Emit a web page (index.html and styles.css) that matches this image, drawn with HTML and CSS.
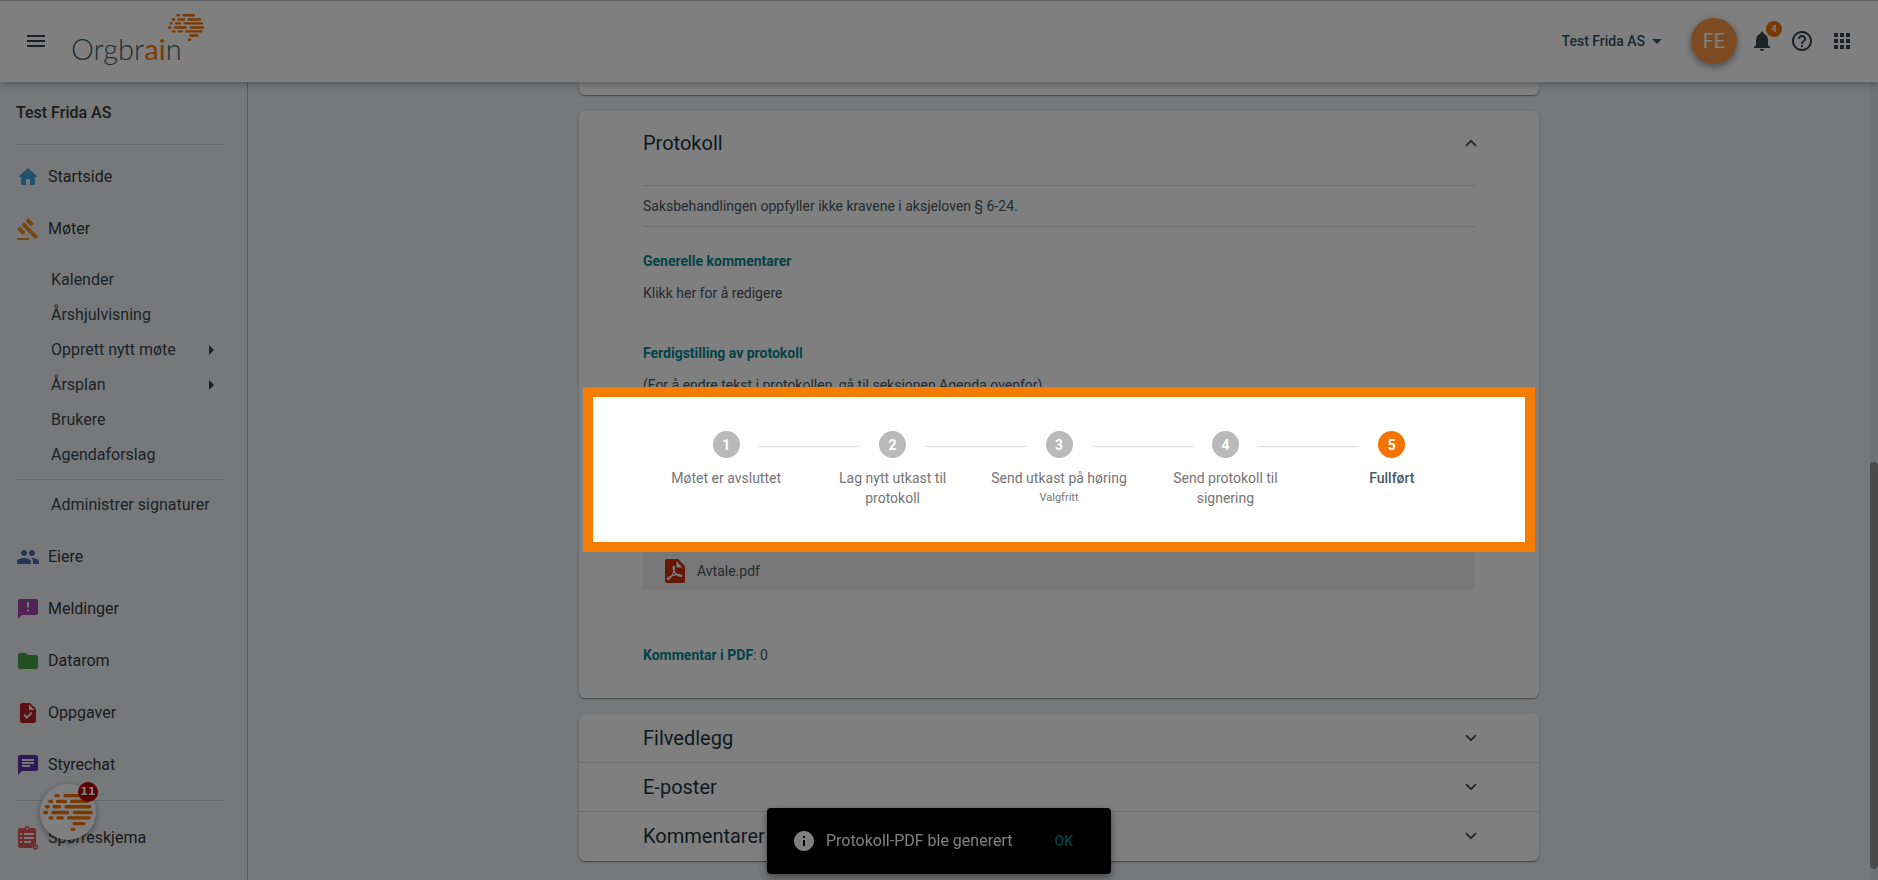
FILE: index.html
```html
<!DOCTYPE html>
<html lang="nb">
<head>
<meta charset="utf-8">
<title>Orgbrain</title>
<link rel="stylesheet" href="styles.css">
</head>
<body>
<svg class="defs" aria-hidden="true">
  <symbol id="brain" viewBox="130 821 148 110">
    <path fill="none" stroke="#f37200" stroke-width="10" stroke-linecap="round" d="M169 826h6M195 826h41M150 843h5M173 843h23M215 843h46M140 859h5M163 859h16M198 859h71M135 876h5M159 876h44M223 876h50M151 892h5M174 892h13M206 892h61M222 909h29M216 926h5"/>
  </symbol>
  <symbol id="chevron" viewBox="0 0 12 8"><path fill="none" stroke="currentColor" stroke-width="1.7" d="M1 1.2l5 5 5-5"/></symbol>
</svg>

<header class="topbar">
  <button class="icon-btn" aria-label="Meny"><svg class="icon" viewBox="0 0 24 24"><path d="M3 18h18v-2H3v2zm0-5h18v-2H3v2zm0-7v2h18V6H3z"/></svg></button>
  <a class="logo" href="#" aria-label="Orgbrain"><span class="logo-text">Orgbr<b class="logo-accent">ai</b>n</span><svg class="logo-brain"><use href="#brain"/></svg></a>
  <div class="tools">
    <button class="company">Test Frida AS<svg class="icon" viewBox="0 0 24 24"><path d="M7 10l5 5 5-5z"/></svg></button>
    <button class="avatar">FE</button>
    <div class="tool-icons">
      <button class="icon-btn" aria-label="Varsler"><svg class="icon" viewBox="0 0 24 24"><path d="M12 22c1.1 0 2-.9 2-2h-4c0 1.1.89 2 2 2zm6-6v-5c0-3.07-1.64-5.64-4.5-6.32V4c0-.83-.67-1.5-1.5-1.5s-1.5.67-1.5 1.5v.68C7.63 5.36 6 7.92 6 11v5l-2 2v1h16v-1l-2-2z"/></svg><span class="badge">4</span></button>
      <button class="icon-btn" aria-label="Hjelp"><svg class="icon" viewBox="0 0 24 24"><path d="M11 18h2v-2h-2v2zm1-16C6.48 2 2 6.48 2 12s4.48 10 10 10 10-4.48 10-10S17.52 2 12 2zm0 18c-4.41 0-8-3.59-8-8s3.59-8 8-8 8 3.59 8 8-3.59 8-8 8zm0-14c-2.21 0-4 1.79-4 4h2c0-1.1.9-2 2-2s2 .9 2 2c0 2-3 1.75-3 5h2c0-2.25 3-2.5 3-5 0-2.21-1.79-4-4-4z"/></svg></button>
      <button class="icon-btn" aria-label="Apper"><svg class="icon" viewBox="0 0 24 24"><path d="M4 8h4V4H4v4zm6 12h4v-4h-4v4zm-6 0h4v-4H4v4zm0-6h4v-4H4v4zm6 0h4v-4h-4v4zm6-10v4h4V4h-4zm-6 4h4V4h-4v4zm6 6h4v-4h-4v4zm0 6h4v-4h-4v4z"/></svg></button>
    </div>
  </div>
</header>

<div class="shell">
  <nav class="sidebar">
    <h2 class="org">Test Frida AS</h2>
    <div class="group">
      <a class="item" href="#"><svg class="icon blue" viewBox="0 0 24 24"><path d="M10 20v-6h4v6h5v-8h3L12 3 2 12h3v8z"/></svg>Startside</a>
      <a class="item" href="#"><svg class="icon amber" viewBox="0 0 24 24"><path d="M1 21h12v2H1zM5.245 8.07l2.83-2.827 14.14 14.142-2.828 2.828zM12.317 1l5.657 5.656-2.83 2.83-5.654-5.66zM3.825 9.485l5.657 5.657-2.828 2.828-5.657-5.657z"/></svg>Møter</a>
    </div>
    <div class="subgroup">
      <a class="sub" href="#">Kalender</a>
      <a class="sub" href="#">Årshjulvisning</a>
      <a class="sub more" href="#">Opprett nytt møte</a>
      <a class="sub more" href="#">Årsplan</a>
      <a class="sub" href="#">Brukere</a>
      <a class="sub" href="#">Agendaforslag</a>
    </div>
    <div class="subgroup ruled">
      <a class="sub" href="#">Administrer signaturer</a>
    </div>
    <div class="group">
      <a class="item" href="#"><svg class="icon indigo" viewBox="0 0 24 24"><path d="M16 11c1.66 0 2.99-1.34 2.99-3S17.66 5 16 5s-3 1.34-3 3 1.34 3 3 3zm-8 0c1.66 0 2.99-1.34 2.99-3S9.66 5 8 5 5 6.34 5 8s1.34 3 3 3zm0 2c-2.33 0-7 1.17-7 3.5V19h14v-2.5c0-2.33-4.67-3.5-7-3.5zm8 0c-.29 0-.62.02-.97.05 1.16.84 1.97 1.97 1.97 3.45V19h6v-2.5c0-2.33-4.67-3.5-7-3.5z"/></svg>Eiere</a>
      <a class="item" href="#"><svg class="icon purple" viewBox="0 0 24 24"><path d="M20 2H4c-1.1 0-1.99.9-1.99 2L2 22l4-4h14c1.1 0 2-.9 2-2V4c0-1.1-.9-2-2-2zm-7 12.5h-2v-2h2v2zm0-4h-2V5h2v5.5z"/></svg>Meldinger</a>
      <a class="item" href="#"><svg class="icon green" viewBox="0 0 24 24"><path d="M10 4H4c-1.1 0-1.99.9-1.99 2L2 18c0 1.1.9 2 2 2h16c1.1 0 2-.9 2-2V8c0-1.1-.9-2-2-2h-8l-2-2z"/></svg>Datarom</a>
      <a class="item" href="#"><svg class="icon red" viewBox="0 0 24 24"><path d="M14 2H6c-1.1 0-1.99.9-1.99 2L4 20c0 1.1.89 2 1.99 2H18c1.1 0 2-.9 2-2V8l-6-6zm-3.06 16L7.4 14.46l1.41-1.41 2.12 2.12 4.24-4.24 1.41 1.41L10.94 18zM13 9V3.5L18.5 9H13z"/></svg>Oppgaver</a>
      <a class="item" href="#"><svg class="icon violet" viewBox="0 0 24 24"><path d="M20 2H4c-1.1 0-1.99.9-1.99 2L2 22l4-4h14c1.1 0 2-.9 2-2V4c0-1.1-.9-2-2-2zM6 9h12v2H6V9zm8 5H6v-2h8v2zm4-6H6V6h12v2z"/></svg>Styrechat</a>
    </div>
    <div class="group last">
      <a class="item" href="#"><svg class="icon coral" viewBox="0 0 24 24"><path fill-rule="evenodd" d="M4 2h4.500a2.600 2.600 0 0 1 5 0H18q2 0 2 2v13.500a4.500 4.500 0 0 0-3.500 4.500H4q-2 0-2-2V4q0-2 2-2zM4 7v2h2V7zm4 0v2h10V7zm-4 4v2h2v-2zm4 0v2h10v-2zm-4 4v2h2v-2zm4 0v2h7v-2zM11 1.500a1 1 0 1 0 .1 0z"/><circle cx="19.500" cy="21" r="2.700"/><path d="M18.200 21l1 1 1.700-2" fill="none" stroke="#eef0f2" stroke-width=".9"/></svg>Spørreskjema</a>
    </div>
  </nav>

  <main class="content">
    <section class="card card-tail"></section>

    <section class="card">
      <button class="panel-head panel-open">Protokoll<svg class="chev up"><use href="#chevron"/></svg></button>
      <div class="panel-body">
        <p class="notice">Saksbehandlingen oppfyller ikke kravene i aksjeloven § 6-24.</p>
        <h3 class="subtitle first">Generelle kommentarer</h3>
        <p class="text">Klikk her for å redigere</p>
        <h3 class="subtitle">Ferdigstilling av protokoll</h3>
        <p class="text">(For å endre tekst i protokollen, gå til seksjonen Agenda ovenfor)</p>
        <ol class="stepper">
          <li class="step"><div class="step-head"><span class="dot">1</span></div><div class="label">Møtet er avsluttet</div></li>
          <li class="step"><div class="step-head"><span class="dot">2</span></div><div class="label">Lag nytt utkast til protokoll</div></li>
          <li class="step"><div class="step-head"><span class="dot">3</span></div><div class="label">Send utkast på høring<small class="optional">Valgfritt</small></div></li>
          <li class="step"><div class="step-head"><span class="dot">4</span></div><div class="label">Send protokoll til signering</div></li>
          <li class="step current"><div class="step-head"><span class="dot">5</span></div><div class="label">Fullført</div></li>
        </ol>
        <a class="file" href="#"><svg class="pdf" viewBox="0 0 20 24"><path fill="#c9310f" d="M2 0h11l7 7v15q0 2-2 2H2q-2 0-2-2V2Q0 0 2 0z"/><path fill="#fff" d="M11.500 2v6.500H17z"/><path fill="none" stroke="#fff" stroke-width="1.200" d="M2.500 20.500c-1-1 1.500-3 5-4 4-1.200 9-1.200 9.300.2.200 1.300-3 .7-5.500-1.700C8.800 12.700 7.500 9 8.300 7.500c.8-1 1.500.6.900 3.500-.6 3-4.500 10.500-6.700 9.500z"/></svg>Avtale.pdf</a>
        <p class="pdf-comments"><strong class="teal">Kommentar i PDF</strong>: 0</p>
      </div>
    </section>

    <section class="card card-list">
      <button class="panel-head">Filvedlegg<svg class="chev"><use href="#chevron"/></svg></button>
      <button class="panel-head">E-poster<svg class="chev"><use href="#chevron"/></svg></button>
      <button class="panel-head">Kommentarer<svg class="chev"><use href="#chevron"/></svg></button>
    </section>
  </main>
  <div class="scroll-track" aria-hidden="true"><div class="scroll-thumb"></div></div>
</div>

<button class="chat" aria-label="Chat"><svg class="chat-brain"><use href="#brain"/></svg><span class="chat-badge">11</span></button>

<div class="snackbar" role="status">
  <svg class="icon" viewBox="0 0 24 24"><path d="M12 2C6.48 2 2 6.48 2 12s4.48 10 10 10 10-4.48 10-10S17.52 2 12 2zm1 15h-2v-6h2v6zm0-8h-2V7h2v2z"/></svg>
  <span class="snack-text">Protokoll-PDF ble generert</span>
  <button class="snack-ok">OK</button>
</div>

<div class="dim"></div>
</body>
</html>
```

FILE: styles.css
```css
* { box-sizing: border-box; }

body {
  margin: 0;
  height: 100vh;
  display: flex;
  flex-direction: column;
  overflow: hidden;
  background: #eff1f4;
  color: #4a545c;
  font: 14px/20px Roboto, "Liberation Sans", sans-serif;
}

button {
  border: 0;
  padding: 0;
  background: none;
  color: inherit;
  font: inherit;
  cursor: pointer;
}

a { color: inherit; text-decoration: none; }
h2, h3, p, ol { margin: 0; padding: 0; }

.defs { display: none; }
.icon { width: 24px; height: 24px; flex: none; display: block; fill: currentColor; }

/* Top bar */
.topbar {
  flex: none;
  height: 82px;
  display: flex;
  align-items: center;
  padding: 0 24px 1px;
  background: #fff;
  border-top: 1px solid #b4b4b4;
  box-shadow: 0 2px 8px rgba(0, 0, 0, .3);
  position: relative;
  z-index: 1;
  color: #37444c;
}
.icon-btn { position: relative; }
.logo { display: flex; align-items: flex-start; margin-left: 23px; height: 54px; }
.logo-text {
  align-self: flex-end;
  font: 300 29px/38px Lato, sans-serif;
  color: #455a64;
}
.logo-accent { font-weight: 400; color: #f57c00; }
.logo-brain { width: 36px; height: 27px; margin-left: -14px; }
.tools { display: flex; align-items: center; margin-left: auto; }
.company { display: flex; align-items: center; font-weight: 500; color: #37505c; }
.avatar {
  width: 46px;
  height: 46px;
  margin: 0 13px 0 22px;
  border-radius: 50%;
  background: #f89746;
  color: #fff;
  font-size: 20px;
  box-shadow: 0 3px 6px rgba(0, 0, 0, .3), 0 2px 12px rgba(0, 0, 0, .15);
}
.tool-icons { display: flex; gap: 16px; }
.badge {
  position: absolute;
  top: -8px;
  right: -8px;
  width: 16px;
  height: 16px;
  border-radius: 50%;
  background: #f57200;
  color: #fff;
  font: 700 9px/16px Roboto, sans-serif;
  text-align: center;
}

/* Shell */
.shell { flex: 1; min-height: 0; display: flex; }

.sidebar {
  flex: none;
  width: 248px;
  border-right: 1px solid #b9bbbd;
  padding: 0 23px 0 16px;
  font-size: 16px;
  color: #35383a;
}
.org {
  font-size: 16px;
  font-weight: 500;
  line-height: 20px;
  padding: 21px 0;
  margin-bottom: 6px;
  border-bottom: 1px solid #cfd0d2;
}
.item { display: flex; align-items: center; gap: 8px; height: 52px; }
.subgroup { padding: 7px 0; color: #37474f; }
.ruled { border-top: 1px solid #cfd0d2; padding-bottom: 9px; }
.sub { display: flex; align-items: center; height: 35px; padding: 0 10px 0 35px; }
.more::after {
  content: "";
  margin-left: auto;
  border-left: 5px solid currentColor;
  border-top: 5px solid transparent;
  border-bottom: 5px solid transparent;
}
.last { margin-top: 9px; padding-top: 11px; border-top: 1px solid #cfd0d2; }
.blue { color: #46a5da; }
.amber { color: #f08c1a; }
.indigo { color: #4f69b5; }
.purple { color: #a144a8; }
.green { color: #43a047; }
.red { color: #b52024; }
.violet { color: #5e35b1; }
.coral { color: #e0565c; }

.content {
  flex: 1;
  min-width: 0;
  display: flex;
  flex-direction: column;
  align-items: center;
  gap: 16px;
}
.card {
  flex: none;
  width: 100%;
  max-width: 960px;
  background: #fff;
  border-radius: 6px;
  box-shadow: 0 1px 1px rgba(0, 0, 0, .35), 0 1px 4px rgba(0, 0, 0, .12);
}
.card-tail { height: 13px; border-radius: 0 0 6px 6px; }
.card-list { padding-bottom: 1px; }
.panel-head {
  width: 100%;
  height: 48px;
  display: flex;
  align-items: center;
  justify-content: space-between;
  padding: 0 62px 0 64px;
  font-size: 20px;
  color: #1a3440;
}
.panel-head + .panel-head { height: 49px; border-top: 1px solid #dcdcdc; }
.panel-open { height: 64px; }
.chev { width: 12px; height: 8px; color: #4a4a4a; }
.up { transform: rotate(180deg); }

.panel-body { padding: 10px 64px 33px; }
.notice { padding: 10px 0; border: solid #dcdcdc; border-width: 1px 0; }
.subtitle, .teal { font-size: 14px; font-weight: 700; color: #008790; }
.subtitle { margin: 40px 0 12px; }
.first { margin-top: 24px; }

/* Highlighted stepper, raised above the dimmed page */
.stepper {
  position: relative;
  z-index: 20;
  display: flex;
  margin: -8px -60px 0;
  padding: 34px 50px;
  border: 10px solid #f77d00;
  background: #fff;
  color: #757575;
  list-style: none;
}
.step { flex: 1 1 0; min-height: 77px; text-align: center; }
.step-head { display: flex; align-items: center; gap: 19px; margin-bottom: 10px; }
.step-head::before, .step-head::after { content: ""; flex: 1; height: 3px; border-bottom: 1px solid #dcdcdc; }
.step:first-child .step-head::before, .step:last-child .step-head::after { border-color: transparent; }
.dot {
  width: 27px;
  height: 27px;
  border-radius: 50%;
  background: #b9b9b9;
  color: #fff;
  font-weight: 700;
  line-height: 28px;
}
.label { padding: 0 14px; }
.current { color: #455a64; font-weight: 500; }
.current .dot { background: #f57400; }
.optional { display: block; font-size: 11px; }

.file {
  display: flex;
  align-items: center;
  gap: 12px;
  height: 38px;
  padding-left: 22px;
  background: #f0f0f0;
}
.pdf { width: 20px; height: 24px; }
.pdf-comments { margin-top: 55px; }

.scroll-track { flex: none; width: 8px; background: #e3e5e8; display: flex; flex-direction: column; }
.scroll-thumb { margin-top: auto; margin-bottom: 11px; height: 51%; border-radius: 4px; background: #969696; }

/* Floating elements */
.chat {
  position: fixed;
  left: 40px;
  bottom: 40px;
  width: 56px;
  height: 56px;
  border-radius: 50%;
  background: #fff;
  box-shadow: 0 2px 6px rgba(0, 0, 0, .4);
  display: flex;
  align-items: center;
  justify-content: center;
  z-index: 2;
}
.chat-brain { width: 50px; height: 37px; }
.chat-badge {
  position: absolute;
  top: -2px;
  right: -2px;
  width: 20px;
  height: 20px;
  border-radius: 50%;
  background: #b40000;
  color: #fff;
  font: 700 11px/20px "DejaVu Sans", sans-serif;
}

.snackbar {
  position: fixed;
  left: 50%;
  bottom: 6px;
  width: 344px;
  height: 66px;
  transform: translateX(-50%);
  display: flex;
  align-items: center;
  padding: 0 38px 0 25px;
  border-radius: 4px;
  background: #000;
  color: #fff;
  font-size: 16px;
  box-shadow: 0 3px 8px rgba(0, 0, 0, .45);
  z-index: 3;
}
.snack-text { margin-left: 10px; }
.snack-ok { margin-left: auto; font-size: 14px; font-weight: 500; color: #00838f; }

.dim { position: fixed; inset: 0; z-index: 10; background: rgba(0, 0, 0, .5); pointer-events: none; }
```
